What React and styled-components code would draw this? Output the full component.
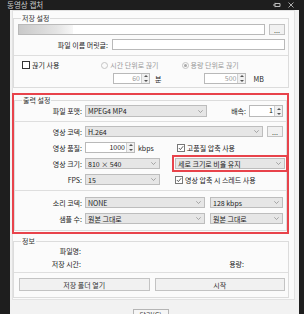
import React from 'react';
import styled, { createGlobalStyle } from 'styled-components';

const GlobalStyle = createGlobalStyle`
  html, body { margin: 0; padding: 0; background: #1e1e1e; }
  body { font-family: "Noto Sans CJK KR", "Noto Sans", sans-serif; }
`;

const Window = styled.div`
  width: 304px;
  height: 314px;
  overflow: hidden;
  background: #1e1e1e;
  display: flex;
  flex-direction: column;
`;

const TitleBar = styled.div`
  height: 12px;
  display: flex;
  align-items: center;
  padding: 0 10px 0 7px;
  color: #cfcfcf;
  font-size: 7.5px;
  line-height: 10px;
`;

const TitleText = styled.span`
  flex: 1;
`;

const TitleIcons = styled.div`
  display: flex;
  gap: 7px;
  align-items: center;
`;

const Body = styled.div`
  flex: 1;
  margin: 0 5px 0 10px;
  background: #f2f2f2;
  display: flex;
  flex-direction: column;
  color: #222;
  font-size: 7px;
  line-height: 10px;
`;

const Panel = styled.div`
  background: #fbfbfb;
  border: 1px solid #e2e2e2;
  margin: 0 4px 0 2px;
  padding: 0 5px 1px 0;
`;

const Group = styled.fieldset`
  margin: ${(p) => p.$mt || 0}px 0 0 0;
  padding: 0 3px ${(p) => p.$pb || 3}px 4px;
  border: 1px solid #dcdcdc;
  min-width: 0;
`;

const Legend = styled.legend`
  margin-left: 3px;
  padding: 0 1px;
  font-size: 7px;
  line-height: 10px;
  color: #333;
`;

const RedFrame = styled.div`
  margin-top: 5px;
  margin-left: -1px;
  border: 2px solid #e8434b;
  padding: 0 0 1px 0;
`;

const Row = styled.div`
  display: flex;
  align-items: center;
  height: ${(p) => p.$h || 11}px;
  margin-top: ${(p) => p.$mt || 0}px;
`;

const Separator = styled.div`
  height: 1px;
  background: #dedede;
  margin: ${(p) => p.$mt || 5}px -3px 0 -4px;
`;

const Label = styled.span`
  width: ${(p) => p.$w}px;
  margin-left: ${(p) => p.$ml || 0}px;
  text-align: right;
  white-space: nowrap;
  flex-shrink: 0;
  color: ${(p) => (p.$disabled ? '#9a9a9a' : '#222')};
`;

const Text = styled.span`
  margin-left: ${(p) => p.$ml || 0}px;
  white-space: nowrap;
  color: ${(p) => (p.$disabled ? '#9a9a9a' : '#222')};
`;

const Input = styled.div`
  height: 100%;
  box-sizing: border-box;
  border: 1px solid #b9b9b9;
  background: #fff;
  margin-left: ${(p) => p.$ml || 0}px;
  flex: ${(p) => (p.$w ? `0 0 ${p.$w}px` : 1)};
`;

const BlurPath = styled.div`
  width: 54px;
  height: 100%;
  background: linear-gradient(90deg, #c9c9c9, #e4e4e4 70%, #f7f7f7);
  filter: blur(0.6px);
`;

const Combo = styled.div`
  height: 100%;
  box-sizing: border-box;
  border: 1px solid #bdbdbd;
  background: #e6e6e6;
  margin-left: ${(p) => p.$ml || 0}px;
  flex: ${(p) => (p.$w ? `0 0 ${p.$w}px` : 1)};
  display: flex;
  align-items: center;
  padding: 0 3px 0 2px;
  position: relative;
`;

const Highlight = styled.div`
  margin-left: ${(p) => p.$ml || 0}px;
  flex: 0 0 ${(p) => p.$w}px;
  height: 100%;
  display: flex;
  outline: 2px solid #e8434b;
  outline-offset: 1px;
`;

const ComboText = styled.span`
  flex: 1;
  white-space: nowrap;
  overflow: hidden;
`;

const Chevron = () => (
  <svg width="5" height="3" viewBox="0 0 5 3">
    <path d="M0.3 0.3 L2.5 2.5 L4.7 0.3" fill="none" stroke="#888" strokeWidth="0.7" />
  </svg>
);

const Spin = styled.div`
  height: 100%;
  box-sizing: border-box;
  border: 1px solid #b9b9b9;
  background: #fff;
  margin-left: ${(p) => p.$ml || 0}px;
  flex: 0 0 ${(p) => p.$w}px;
  display: flex;
  color: ${(p) => (p.$disabled ? '#9a9a9a' : '#222')};
`;

const SpinValue = styled.span`
  flex: 1;
  text-align: right;
  padding-right: 1px;
  line-height: 9px;
`;

const SpinArrows = styled.div`
  width: 7px;
  border-left: 1px solid #d0d0d0;
  background: #f0f0f0;
  display: flex;
  flex-direction: column;
  align-items: center;
  justify-content: space-around;
`;

const Tri = ({ down }) => (
  <svg width="4" height="2" viewBox="0 0 4 2">
    <path d={down ? 'M0 0 L4 0 L2 2 Z' : 'M0 2 L4 2 L2 0 Z'} fill="#555" />
  </svg>
);

const SpinBox = ({ value, w, ml, disabled }) => (
  <Spin $w={w} $ml={ml} $disabled={disabled}>
    <SpinValue>{value}</SpinValue>
    <SpinArrows>
      <Tri />
      <Tri down />
    </SpinArrows>
  </Spin>
);

const Button = styled.div`
  height: 100%;
  box-sizing: border-box;
  border: 1px solid #c3c3c3;
  background: #f1f1f1;
  margin-left: ${(p) => p.$ml || 0}px;
  flex: ${(p) => (p.$w ? `0 0 ${p.$w}px` : 1)};
  display: flex;
  align-items: center;
  justify-content: center;
  color: #333;
`;

const Box = styled.span`
  width: 8px;
  height: 8px;
  box-sizing: border-box;
  border: 1px solid ${(p) => (p.$checked ? '#777' : '#333')};
  background: #fff;
  margin-left: ${(p) => p.$ml || 0}px;
  display: flex;
  align-items: center;
  justify-content: center;
  flex-shrink: 0;
`;

const Check = ({ checked, ml, children }) => (
  <>
    <Box $checked={checked} $ml={ml}>
      {checked && (
        <svg width="6" height="6" viewBox="0 0 6 6">
          <path d="M0.8 3 L2.4 4.6 L5.2 1.2" fill="none" stroke="#333" strokeWidth="0.8" />
        </svg>
      )}
    </Box>
    <Text $ml={2}>{children}</Text>
  </>
);

const RadioDot = styled.span`
  width: 7px;
  height: 7px;
  box-sizing: border-box;
  border-radius: 50%;
  border: 1px solid #c4c4c4;
  background: #fafafa;
  margin-left: ${(p) => p.$ml || 0}px;
  display: flex;
  align-items: center;
  justify-content: center;
  flex-shrink: 0;
  &::after {
    content: '';
    width: 3px;
    height: 3px;
    border-radius: 50%;
    background: ${(p) => (p.$checked ? '#a8a8a8' : 'transparent')};
  }
`;

const Footer = styled.div`
  display: flex;
  justify-content: center;
  padding: 9px 8px 0 0;
`;

const CloseButton = styled.div`
  width: 36px;
  height: 14px;
  box-sizing: border-box;
  border: 1px solid #b5b5b5;
  background: #f6f6f6;
  text-align: center;
  line-height: 10px;
  color: #333;
`;

const App = () => (
  <>
    <GlobalStyle />
    <Window>
      <TitleBar>
        <TitleText>동영상 캡처</TitleText>
        <TitleIcons>
          <svg width="8" height="6" viewBox="0 0 8 6">
            <path d="M0 3 H2 M2 0.8 V5.2 M2 1.5 H7 V4.5 H2" fill="none" stroke="#bdbdbd" strokeWidth="1" />
          </svg>
          <svg width="6" height="6" viewBox="0 0 6 6">
            <path d="M0.5 0.5 L5.5 5.5 M5.5 0.5 L0.5 5.5" stroke="#bdbdbd" strokeWidth="0.9" />
          </svg>
        </TitleIcons>
      </TitleBar>
      <Body>
        <Panel>
          <Group $mt={2} $pb={3}>
            <Legend>저장 설정</Legend>
            <Row $mt={1}>
              <Input>
                <BlurPath />
              </Input>
              <Button $w={16} $ml={4}>...</Button>
            </Row>
            <Row $mt={4}>
              <Label $w={90}>파일 이름 머릿글:</Label>
              <Input $ml={4} />
            </Row>
            <Separator $mt={5} />
            <Row $mt={4} $h={10}>
              <Check ml={4}>끊기 사용</Check>
              <RadioDot $ml={42} />
              <Text $ml={2} $disabled>시간 단위로 끊기</Text>
              <RadioDot $ml={23} $checked />
              <Text $ml={2} $disabled>용량 단위로 끊기</Text>
            </Row>
            <Row $mt={3}>
              <SpinBox value="60" w={37} ml={95} disabled />
              <Text $ml={5}>분</Text>
              <SpinBox value="500" w={42} ml={43} disabled />
              <Text $ml={7}>MB</Text>
            </Row>
          </Group>

          <RedFrame>
            <Group $pb={6}>
              <Legend>출력 설정</Legend>
              <Row $h={12}>
                <Label $w={63}>파일 포맷:</Label>
                <Combo $w={122} $ml={3}>
                  <ComboText>MPEG4 MP4</ComboText>
                  <Chevron />
                </Combo>
                <Label $w={39}>배속:</Label>
                <SpinBox value="1" w={34} ml={3} />
              </Row>
              <Separator $mt={4} />
              <Row $mt={4}>
                <Label $w={63}>영상 코덱:</Label>
                <Combo $ml={3}>
                  <ComboText>H.264</ComboText>
                  <Chevron />
                </Combo>
                <Button $w={16} $ml={4}>...</Button>
              </Row>
              <Row $mt={5}>
                <Label $w={63}>영상 품질:</Label>
                <SpinBox value="1000" w={50} ml={3} />
                <Text $ml={3}>kbps</Text>
                <Check ml={23} checked>고품질 압축 사용</Check>
              </Row>
              <Row $mt={5}>
                <Label $w={63}>영상 크기:</Label>
                <Combo $w={75} $ml={3}>
                  <ComboText>810 × 540</ComboText>
                  <Chevron />
                </Combo>
                <Highlight $w={110} $ml={15}>
                  <Combo>
                    <ComboText>세로 크기로 비율 유지</ComboText>
                    <Chevron />
                  </Combo>
                </Highlight>
              </Row>
              <Row $mt={5}>
                <Label $w={63}>FPS:</Label>
                <Combo $w={75} $ml={3}>
                  <ComboText>15</ComboText>
                  <Chevron />
                </Combo>
                <Check ml={15} checked>영상 압축 시 스레드 사용</Check>
              </Row>
              <Separator $mt={5} />
              <Row $mt={6}>
                <Label $w={63}>소리 코덱:</Label>
                <Combo $w={120} $ml={3}>
                  <ComboText>NONE</ComboText>
                  <Chevron />
                </Combo>
                <Combo $ml={5}>
                  <ComboText>128 kbps</ComboText>
                  <Chevron />
                </Combo>
              </Row>
              <Row $mt={5}>
                <Label $w={63}>샘플 수:</Label>
                <Combo $w={120} $ml={3}>
                  <ComboText>원본 그대로</ComboText>
                  <Chevron />
                </Combo>
                <Combo $ml={5}>
                  <ComboText>원본 그대로</ComboText>
                  <Chevron />
                </Combo>
              </Row>
            </Group>
          </RedFrame>

          <Group $mt={2} $pb={6}>
            <Legend>정보</Legend>
            <Row $h={10}>
              <Label $w={63}>파일명:</Label>
            </Row>
            <Row $mt={3} $h={10}>
              <Label $w={63}>저장 시간:</Label>
              <Label $w={163}>용량:</Label>
            </Row>
            <Separator $mt={3} />
            <Row $mt={5} $h={13}>
              <Button $ml={1}>저장 폴더 열기</Button>
              <Button $ml={5}>시작</Button>
            </Row>
          </Group>
        </Panel>
        <Footer>
          <CloseButton>닫기(C)</CloseButton>
        </Footer>
      </Body>
    </Window>
  </>
);

export default App;
